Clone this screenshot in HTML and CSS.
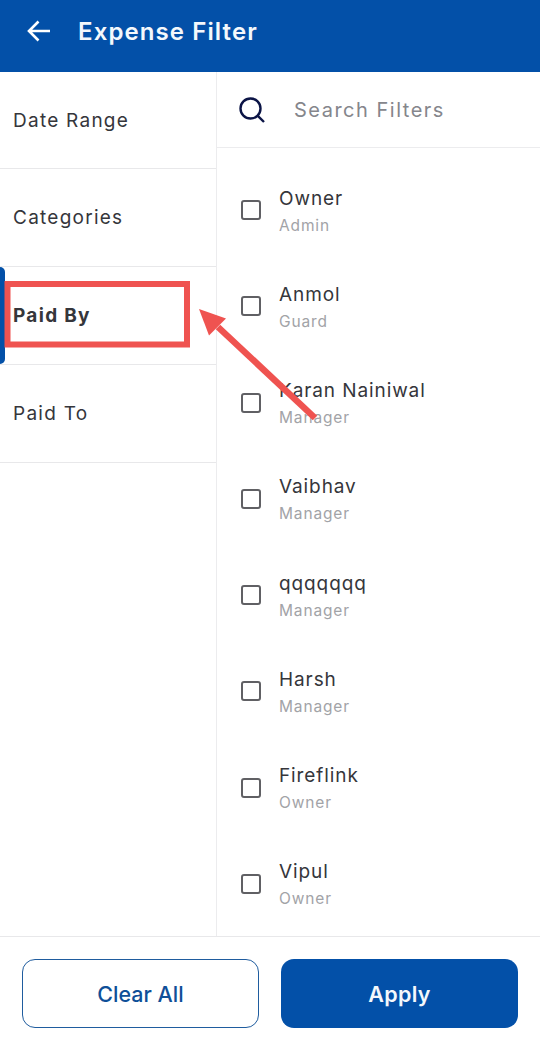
FILE: index.html
```html
<!DOCTYPE html>
<html lang="en">

<head>
    <meta charset="utf-8" />
    <title>Expense Filter</title>
    <link rel="stylesheet" href="styles.css">
</head>

<body>
    <header class="topbar">
        <svg class="back" width="26" height="24" viewBox="0 0 26 24">
            <path d="M24 12H3M12.5 2.5L3 12l9.5 9.5" fill="none" stroke="#fff" stroke-width="2.6" />
        </svg>
        <h1>Expense Filter</h1>
    </header>

    <main class="panes">
        <nav class="tabs">
            <div class="tab">Date Range</div>
            <div class="tab">Categories</div>
            <div class="tab active">Paid By</div>
            <div class="tab">Paid To</div>
        </nav>

        <section class="filters">
            <div class="search">
                <svg width="28" height="28" viewBox="0 0 28 28">
                    <circle cx="12.5" cy="12.5" r="10" fill="none" stroke="#0b1446" stroke-width="2.4" />
                    <path d="M19.8 19.8L26 26" stroke="#0b1446" stroke-width="2.4" />
                </svg>
                <span class="placeholder">Search Filters</span>
            </div>

            <ul class="people">
                <li><span class="box"></span><div><div class="name">Owner</div><div class="role">Admin</div></div></li>
                <li><span class="box"></span><div><div class="name">Anmol</div><div class="role">Guard</div></div></li>
                <li><span class="box"></span><div><div class="name">Karan Nainiwal</div><div class="role">Manager</div></div></li>
                <li><span class="box"></span><div><div class="name">Vaibhav</div><div class="role">Manager</div></div></li>
                <li><span class="box"></span><div><div class="name">qqqqqqq</div><div class="role">Manager</div></div></li>
                <li><span class="box"></span><div><div class="name">Harsh</div><div class="role">Manager</div></div></li>
                <li><span class="box"></span><div><div class="name">Fireflink</div><div class="role">Owner</div></div></li>
                <li><span class="box"></span><div><div class="name">Vipul</div><div class="role">Owner</div></div></li>
            </ul>
        </section>
    </main>

    <footer class="actions">
        <button type="button" class="clear">Clear All</button>
        <button type="button" class="apply">Apply</button>
    </footer>

    <!-- red annotation drawn over the page -->
    <svg class="markup" width="540" height="1038" viewBox="0 0 540 1038">
        <rect x="7.5" y="284" width="179.5" height="60.5" fill="none" stroke="#ef5350" stroke-width="6" />
        <path d="M315 418L218 327" stroke="#ef5350" stroke-width="6.5" fill="none" />
        <path d="M199 309L226 318.5L209 335.5Z" fill="#ef5350" />
    </svg>
</body>

</html>
```

FILE: styles.css
```css
* {
    box-sizing: border-box;
    font-family: "Inter", "Liberation Sans", sans-serif;
}

body {
    position: relative;
    display: flex;
    flex-direction: column;
    height: 1038px;
    margin: 0;
    background: #fff;
    overflow: hidden;
}

.topbar {
    display: flex;
    align-items: center;
    gap: 26px;
    flex: none;
    height: 72px;
    padding: 0 0 10px 26px;
    background: #0350a8;
}

.topbar h1 {
    margin: 0;
    color: #f4f8fc;
    font-size: 24px;
    font-weight: 600;
    letter-spacing: 1.1px;
}

.panes {
    display: flex;
    flex: 1;
    min-height: 0;
}

.tabs {
    flex: none;
    width: 217px;
    border-right: 1px solid #ececee;
}

.tab {
    position: relative;
    display: flex;
    align-items: center;
    height: 98px;
    padding: 0 0 0 13px;
    border-bottom: 1px solid #e8e8ea;
    color: #35363b;
    font-size: 19px;
    letter-spacing: 1.25px;
}

.tab:first-child {
    height: 97px;
}

.tab.active {
    font-weight: 700;
    letter-spacing: 1.3px;
}

.tab.active::before {
    content: "";
    position: absolute;
    left: 0;
    top: 0;
    width: 5px;
    height: 97px;
    border-radius: 0 5px 5px 0;
    background: #0350a8;
}

.filters {
    flex: 1;
    min-width: 0;
}

.search {
    display: flex;
    align-items: center;
    gap: 28px;
    height: 76px;
    padding: 0 0 0 21px;
    border-bottom: 1px solid #ececee;
}

.placeholder {
    color: #85868c;
    font-size: 20px;
    letter-spacing: 1.5px;
}

.people {
    margin: 0;
    padding: 15px 0 0;
    list-style: none;
}

.people li {
    display: flex;
    align-items: center;
    gap: 18px;
    height: 96.25px;
    padding-left: 24px;
}

.box {
    flex: none;
    width: 20px;
    height: 20px;
    margin-top: -2px;
    border: 2.5px solid #606064;
    border-radius: 3px;
}

.name {
    margin-top: -1px;
    color: #35363b;
    font-size: 19px;
    line-height: 26px;
    letter-spacing: 0.9px;
}

.role {
    margin-top: 4px;
    color: #a2a3a7;
    font-size: 15.5px;
    line-height: 20px;
    letter-spacing: 0.85px;
}

.actions {
    display: flex;
    justify-content: space-between;
    flex: none;
    height: 102px;
    padding: 22px 22px 11px;
    border-top: 1px solid #e8e8ea;
}

.actions button {
    width: 237px;
    height: 69px;
    border-radius: 13px;
    font-size: 21.5px;
}

.clear {
    border: 1.5px solid #1f5c9e;
    background: #fff;
    color: #0f4f98;
    font-weight: 500;
}

.apply {
    border: 0;
    background: #0350a8;
    color: #f4f8fc;
    font-weight: 600;
    letter-spacing: 0.3px;
}

.markup {
    position: absolute;
    left: 0;
    top: 0;
    pointer-events: none;
}
```
